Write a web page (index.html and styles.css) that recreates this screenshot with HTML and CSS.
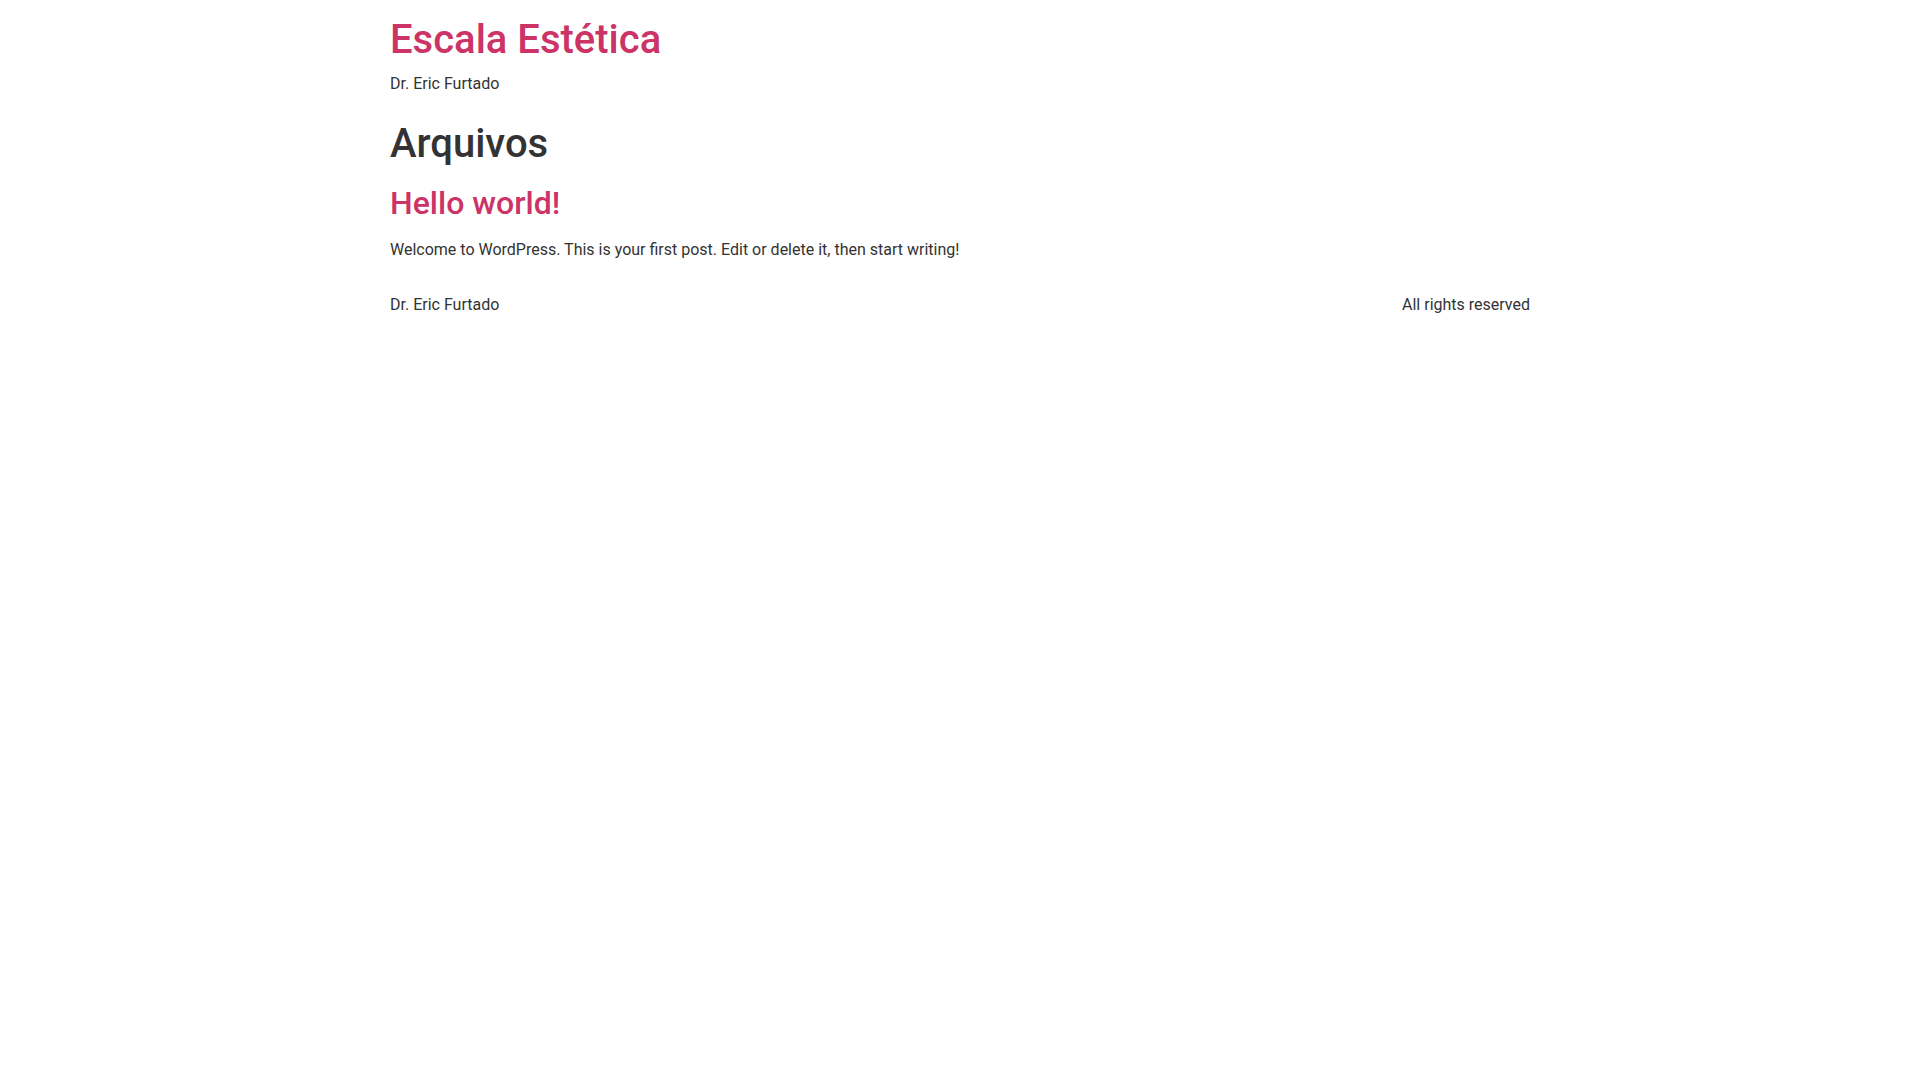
FILE: index.html
```html
<!DOCTYPE html>
<html lang="pt-BR">
<head>
<meta charset="utf-8">
<title>Arquivos - Escala Estética</title>
<link rel="stylesheet" href="styles.css">
</head>
<body>
<header class="site-header">
  <div class="site-branding">
    <h1 class="site-title"><a href="#">Escala Estética</a></h1>
    <p class="site-description">Dr. Eric Furtado</p>
  </div>
</header>
<main class="site-main">
  <div class="page-header">
    <h1 class="entry-title">Arquivos</h1>
  </div>
  <div class="page-content">
    <article class="post">
      <h2 class="entry-title"><a href="#">Hello world!</a></h2>
      <p>Welcome to WordPress. This is your first post. Edit or delete it, then start writing!</p>
    </article>
  </div>
</main>
<footer class="site-footer">
  <div class="footer-inner">
    <p class="site-description">Dr. Eric Furtado</p>
    <p class="copyright">All rights reserved</p>
  </div>
</footer>
</body>
</html>
```
FILE: styles.css
```css
html, body {
  margin: 0;
  padding: 0;
}
body {
  font-family: Roboto, "Liberation Sans", sans-serif;
  font-size: 16px;
  line-height: 1.5;
  color: #333;
  background: #fff;
}
a {
  color: #c36;
  text-decoration: none;
}
h1, h2 {
  margin: 0 0 8px;
  font-weight: 500;
  line-height: 1.2;
}
h1 { font-size: 40px; }
h2 { font-size: 32px; }
p { margin: 0 0 14px; }
.site-header,
.site-main,
.site-footer {
  max-width: 1140px;
  margin: 0 auto;
}
.site-header {
  padding: 16px 0;
}
.site-title {
  margin: 0 0 8px;
}
.site-header .site-description {
  margin: 0;
}
.page-header .entry-title {
  margin-top: 8px;
}
.post h2 {
  margin-top: 16px;
}
.post p {
  margin: 16px 0 15px;
}
.site-footer {
  padding: 16px 0;
}
.footer-inner {
  display: flex;
  justify-content: space-between;
  align-items: center;
}
.footer-inner p {
  margin: 0;
}
```
